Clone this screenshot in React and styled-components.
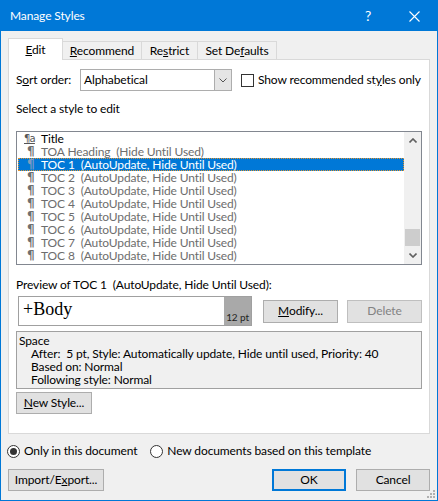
import { createGlobalStyle, styled } from "styled-components";

const GlobalStyle = createGlobalStyle`
  html, body {
    margin: 0;
    padding: 0;
    background: #ffffff;
  }
  body {
    font-family: Lato, "Noto Sans", sans-serif;
    font-size: 12px;
    line-height: 16px;
    letter-spacing: -0.12px;
    color: #000;
  }
  * {
    box-sizing: border-box;
  }
`;

const Window = styled.div`
  width: 438px;
  height: 501px;
  border: 1px solid #0078d7;
  background: #f0f0f0;
  display: flex;
  flex-direction: column;
  position: relative;
`;

const TitleBar = styled.div`
  height: 30px;
  flex: none;
  background: #0078d7;
  color: #fff;
  display: flex;
  align-items: center;
  padding-left: 9px;
`;

const TitleText = styled.div`
  flex: 1;
  font-size: 12px;
`;

const CaptionBtn = styled.div`
  width: 46px;
  height: 30px;
  display: flex;
  align-items: center;
  justify-content: center;
  font-size: 14px;
`;

const Body = styled.div`
  flex: 1;
  display: flex;
  flex-direction: column;
  padding: 7px 7px 9px;
`;

const TabStrip = styled.div`
  display: flex;
  align-items: flex-end;
  height: 21px;
`;

const Tab = styled.div`
  position: relative;
  width: ${(p) => p.$w}px;
  height: ${(p) => (p.$active ? 22 : 18)}px;
  margin-bottom: ${(p) => (p.$active ? -1 : 0)}px;
  margin-left: ${(p) => (p.$first ? 0 : -1)}px;
  z-index: ${(p) => (p.$active ? 2 : 1)};
  background: ${(p) => (p.$active ? "#fff" : "#f0f0f0")};
  border: 1px solid #d9d9d9;
  border-bottom: none;
  display: flex;
  align-items: center;
  justify-content: center;
  padding-top: ${(p) => (p.$active ? 0 : 1)}px;
`;

const Panel = styled.div`
  height: 375px;
  flex: none;
  background: #fff;
  border: 1px solid #d9d9d9;
  display: flex;
  flex-direction: column;
  padding: 9px 6px 0 7px;
`;

const Row = styled.div`
  display: flex;
  align-items: center;
  white-space: nowrap;
`;

const FieldLabel = styled.div`
  width: 64px;
`;

const Select = styled.div`
  width: 152px;
  height: 22px;
  border: 1px solid #adadad;
  display: flex;
`;

const SelectValue = styled.div`
  flex: 1;
  padding-left: 3px;
  display: flex;
  align-items: center;
`;

const DropBtn = styled.div`
  width: 17px;
  background: #e5e5e5;
  border-left: 1px solid #adadad;
  display: flex;
  align-items: center;
  justify-content: center;
`;

const CheckBox = styled.div`
  width: 13px;
  height: 13px;
  border: 1px solid #333;
  background: #fff;
  margin-left: 9px;
  margin-right: 4px;
`;

const SectionLabel = styled.div`
  line-height: 16px;
  margin-top: ${(p) => p.$mt}px;
  white-space: nowrap;
`;

const ListBox = styled.div`
  width: 406px;
  height: 134px;
  margin-top: 14px;
  border: 1px solid #828790;
  display: flex;
`;

const ListItems = styled.div`
  flex: 1;
  padding-left: 1px;
`;

const ListRow = styled.div`
  height: 13px;
  line-height: 13px;
  display: flex;
  align-items: center;
  white-space: nowrap;
  background: ${(p) => (p.$selected ? "#0078d7" : "transparent")};
  outline: ${(p) => (p.$selected ? "1px dotted #e09430" : "none")};
  outline-offset: -1px;
  color: ${(p) => (p.$selected ? "#fff" : p.$hidden ? "#6d6d6d" : "#000")};
`;

const Pilcrow = styled.span`
  width: 23px;
  padding-left: 9px;
  font-family: "DejaVu Sans", sans-serif;
  font-size: 12px;
  line-height: 13px;
  font-weight: bold;
  color: ${(p) => (p.$selected ? "#7d9cc0" : "#707070")};
`;

const ParaIcon = styled.span`
  width: 23px;
  padding-left: 6px;
  font-family: "DejaVu Sans", sans-serif;
  font-size: 10px;
  line-height: 11px;
  color: #555;
  text-decoration: underline;
  letter-spacing: -0.8px;
`;

const ScrollBar = styled.div`
  width: 17px;
  background: #f0f0f0;
  display: flex;
  flex-direction: column;
  align-items: center;
`;

const ScrollArrow = styled.div`
  height: 17px;
  width: 17px;
  display: flex;
  align-items: center;
  justify-content: center;
`;

const ScrollTrack = styled.div`
  flex: 1;
  width: 100%;
  display: flex;
  flex-direction: column;
  justify-content: flex-end;
  padding: 0 1px 0 1px;
`;

const Thumb = styled.div`
  height: 17px;
  background: #cdcdcd;
  margin-bottom: 1px;
`;

const PreviewRow = styled.div`
  display: flex;
  align-items: center;
  height: 30px;
  margin-top: 3px;
`;

const PreviewBox = styled.div`
  width: 234px;
  height: 30px;
  margin-left: 2px;
  border: 1px solid #a0a0a0;
  display: flex;
`;

const PreviewText = styled.div`
  flex: 1;
  padding-left: 4px;
  font-family: "Liberation Serif", "Times New Roman", serif;
  font-size: 18px;
  line-height: 24px;
  letter-spacing: 0;
`;

const SizeTag = styled.div`
  width: 27px;
  background: #a9a9a9;
  font-size: 10px;
  line-height: 12px;
  display: flex;
  align-items: flex-end;
  justify-content: center;
  padding-bottom: 2px;
  color: #222;
`;

const Button = styled.div`
  width: ${(p) => p.$w}px;
  height: ${(p) => p.$h || 22}px;
  margin-left: ${(p) => p.$ml || 0}px;
  background: #e1e1e1;
  border: ${(p) => (p.$default ? "2px solid #0078d7" : "1px solid #adadad")};
  border-color: ${(p) => (p.$disabled ? "#bfbfbf" : undefined)};
  color: ${(p) => (p.$disabled ? "#838383" : "#000")};
  display: flex;
  align-items: center;
  justify-content: center;
  flex: none;
  white-space: nowrap;
`;

const DescBox = styled.div`
  width: 406px;
  height: 58px;
  margin-top: 5px;
  border: 1px solid #a0a0a0;
  background: #f0f0f0;
  padding: 2px 0 0 2px;
`;

const DescLine = styled.div`
  line-height: 13px;
  padding-left: ${(p) => (p.$indent ? 12 : 0)}px;
  white-space: nowrap;
`;

const Radios = styled.div`
  display: flex;
  align-items: center;
  height: 16px;
  margin-top: 9px;
  margin-left: -1px;
  white-space: nowrap;
`;

const Radio = styled.div`
  width: 13px;
  height: 13px;
  border-radius: 50%;
  border: 1px solid #333;
  background: #fff;
  display: flex;
  align-items: center;
  justify-content: center;
  margin-left: ${(p) => p.$ml || 0}px;
  margin-right: 4px;
  &::after {
    content: "";
    display: ${(p) => (p.$checked ? "block" : "none")};
    width: 7px;
    height: 7px;
    border-radius: 50%;
    background: #333;
  }
`;

const Footer = styled.div`
  display: flex;
  margin-top: 10px;
`;

const Spacer = styled.div`
  flex: 1;
`;

const Grip = styled.svg`
  position: absolute;
  right: 1px;
  bottom: 1px;
`;

const Chevron = ({ up, color = "#606060", w = 8, sw = 1.6 }) => (
  <svg width={w} height="5" viewBox="0 0 8 5">
    <polyline
      points={up ? "0.5,4.5 4,1 7.5,4.5" : "0.5,0.5 4,4 7.5,0.5"}
      fill="none"
      stroke={color}
      strokeWidth={sw}
    />
  </svg>
);

const styles = [
  "TOC 1",
  "TOC 2",
  "TOC 3",
  "TOC 4",
  "TOC 5",
  "TOC 6",
  "TOC 7",
  "TOC 8",
];

export default function App() {
  return (
    <>
      <GlobalStyle />
      <Window>
        <TitleBar>
          <TitleText>Manage Styles</TitleText>
          <CaptionBtn>?</CaptionBtn>
          <CaptionBtn>
            <svg width="11" height="11" viewBox="0 0 11 11">
              <path d="M0.5 0.5L10.5 10.5M10.5 0.5L0.5 10.5" stroke="#fff" strokeWidth="1.1" />
            </svg>
          </CaptionBtn>
        </TitleBar>

        <Body>
          <TabStrip>
            <Tab $w={55} $first $active>
              <span><u>E</u>dit</span>
            </Tab>
            <Tab $w={80}>
              <span><u>R</u>ecommend</span>
            </Tab>
            <Tab $w={57}>
              <span>Re<u>s</u>trict</span>
            </Tab>
            <Tab $w={80}>
              <span>Set De<u>f</u>aults</span>
            </Tab>
          </TabStrip>

          <Panel>
            <Row>
              <FieldLabel>S<u>o</u>rt order:</FieldLabel>
              <Select>
                <SelectValue>Alphabetical</SelectValue>
                <DropBtn>
                  <Chevron color="#555" sw={1} w={8} />
                </DropBtn>
              </Select>
              <CheckBox />
              <span>Show recommended st<u>y</u>les only</span>
            </Row>

            <SectionLabel $mt={10}>Select a style to edit</SectionLabel>

            <ListBox>
              <ListItems>
                <ListRow>
                  <ParaIcon>¶a</ParaIcon>
                  Title
                </ListRow>
                <ListRow $hidden>
                  <Pilcrow>¶</Pilcrow>
                  TOA Heading&nbsp;&nbsp;(Hide Until Used)
                </ListRow>
                {styles.map((s, i) => (
                  <ListRow key={s} $hidden $selected={i === 0}>
                    <Pilcrow $selected={i === 0}>¶</Pilcrow>
                    {s}&nbsp;&nbsp;(AutoUpdate, Hide Until Used)
                  </ListRow>
                ))}
              </ListItems>
              <ScrollBar>
                <ScrollArrow>
                  <Chevron up />
                </ScrollArrow>
                <ScrollTrack>
                  <Thumb />
                </ScrollTrack>
                <ScrollArrow>
                  <Chevron />
                </ScrollArrow>
              </ScrollBar>
            </ListBox>

            <SectionLabel $mt={12}>
              Preview of TOC 1&nbsp;&nbsp;(AutoUpdate, Hide Until Used):
            </SectionLabel>

            <PreviewRow>
              <PreviewBox>
                <PreviewText>+Body</PreviewText>
                <SizeTag>12 pt</SizeTag>
              </PreviewBox>
              <Button $w={75} $h={23} $ml={11}>
                <span><u>M</u>odify...</span>
              </Button>
              <Button $w={75} $h={23} $ml={9} $disabled>
                Delete
              </Button>
            </PreviewRow>

            <DescBox>
              <DescLine>Space</DescLine>
              <DescLine $indent>
                After:&nbsp; 5 pt, Style: Automatically update, Hide until used, Priority: 40
              </DescLine>
              <DescLine $indent>Based on: Normal</DescLine>
              <DescLine $indent>Following style: Normal</DescLine>
            </DescBox>

            <Row style={{ marginTop: 3 }}>
              <Button $w={76}>
                <span><u>N</u>ew Style...</span>
              </Button>
            </Row>
          </Panel>

          <Radios>
            <Radio $checked />
            <span>Only in this document</span>
            <Radio $ml={13} />
            <span>New documents based on this template</span>
          </Radios>

          <Footer>
            <Button $w={96}>
              <span>Import/E<u>x</u>port...</span>
            </Button>
            <Spacer />
            <Button $w={74} $default>
              OK
            </Button>
            <Button $w={74} $ml={10}>
              Cancel
            </Button>
          </Footer>
        </Body>

        <Grip width="11" height="11" viewBox="0 0 11 11">
          <g fill="#b0b0b0">
            <rect x="8" y="2" width="2" height="2" />
            <rect x="5" y="5" width="2" height="2" />
            <rect x="8" y="5" width="2" height="2" />
            <rect x="2" y="8" width="2" height="2" />
            <rect x="5" y="8" width="2" height="2" />
            <rect x="8" y="8" width="2" height="2" />
          </g>
        </Grip>
      </Window>
    </>
  );
}
